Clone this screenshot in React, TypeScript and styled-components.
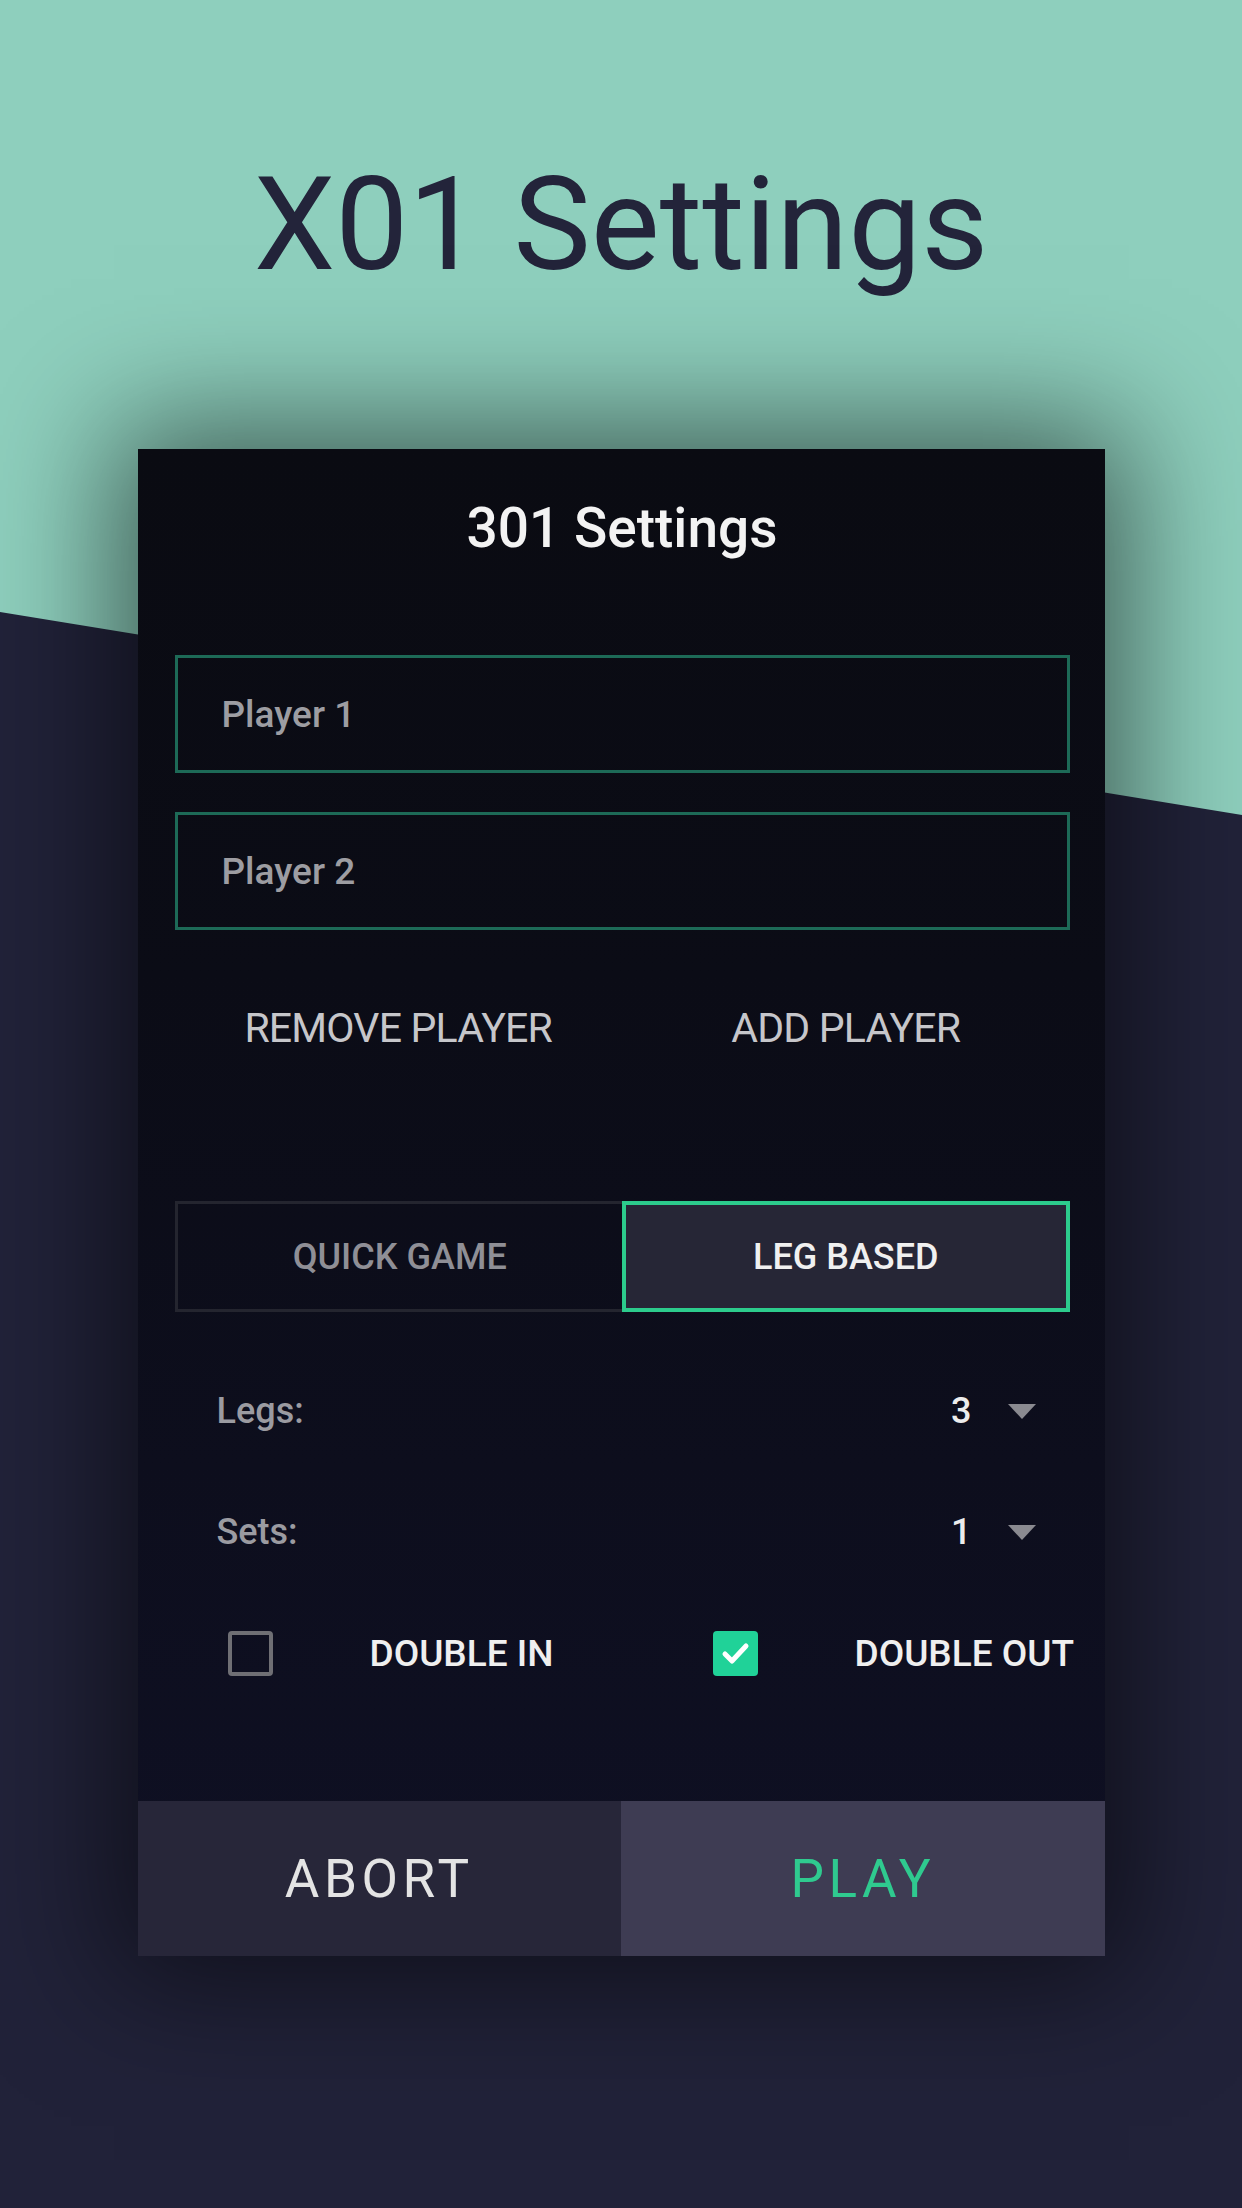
import React from "react";
import styled, { createGlobalStyle } from "styled-components";

const GlobalStyle = createGlobalStyle`
  html, body {
    margin: 0;
    padding: 0;
  }
  body {
    background: #21223a;
    font-family: Roboto, "Noto Sans", sans-serif;
  }
  *, *::before, *::after {
    box-sizing: border-box;
  }
`;

const Page = styled.div`
  position: relative;
  width: 1242px;
  min-height: 2208px;
  padding-top: 149px;
  background: #212239;
  overflow: hidden;

  &::before {
    content: "";
    position: absolute;
    inset: 0;
    background: #8ecfbd;
    clip-path: polygon(0 0, 100% 0, 100% 815px, 0 612px);
  }
`;

const Title = styled.h1`
  position: relative;
  margin: 0;
  font-family: Roboto, sans-serif;
  font-weight: 400;
  font-size: 130px;
  line-height: 152px;
  color: #23243a;
  text-align: center;
`;

const Card = styled.section`
  position: relative;
  width: 967px;
  margin: 148px auto 0;
  background: linear-gradient(180deg, #0a0b12 0%, #0b0c16 35%, #0f1024 100%);
  box-shadow: 0 0 120px 24px rgba(0, 0, 0, 0.55);
`;

const CardBody = styled.div`
  display: flex;
  flex-direction: column;
  padding: 47px 35px 108px 37px;
`;

const CardTitle = styled.h2`
  margin: 0;
  font-family: Roboto, sans-serif;
  font-weight: 500;
  font-size: 55px;
  line-height: 64px;
  color: #f3f3f3;
  text-align: center;
`;

const PlayerList = styled.div`
  display: flex;
  flex-direction: column;
  gap: 39px;
  margin-top: 95px;
`;

const PlayerInput = styled.input`
  display: block;
  width: 100%;
  height: 118px;
  padding: 0 0 0 44px;
  border: 3px solid #1d6a57;
  background: transparent;
  outline: none;
  font-family: Roboto, sans-serif;
  font-weight: 500;
  font-size: 37px;
  color: #9d9da2;

  &::placeholder {
    color: #9d9da2;
    opacity: 1;
  }
`;

const ActionRow = styled.div`
  display: grid;
  grid-template-columns: 1fr 1fr;
  height: 116px;
  margin-top: 40px;
`;

const TextButton = styled.button`
  display: flex;
  align-items: center;
  justify-content: center;
  padding: 0;
  border: none;
  background: none;
  font-family: Roboto, sans-serif;
  font-weight: 400;
  font-size: 41px;
  letter-spacing: -0.8px;
  color: #c6c6ca;
  cursor: pointer;
`;

const ModeToggle = styled.div`
  display: grid;
  grid-template-columns: 1fr 1fr;
  height: 111px;
  margin-top: 115px;
`;

const ModeButton = styled.button<{ $active?: boolean }>`
  display: flex;
  align-items: center;
  justify-content: center;
  padding: 0;
  border: ${(p) => (p.$active ? "4px solid #2ccb8c" : "3px solid #24252f")};
  border-right-width: ${(p) => (p.$active ? "4px" : "0")};
  background: ${(p) => (p.$active ? "#262636" : "transparent")};
  font-family: Roboto, sans-serif;
  font-weight: 500;
  font-size: 36px;
  color: ${(p) => (p.$active ? "#f0f0f0" : "#8f8f96")};
  cursor: pointer;
`;

const SettingsList = styled.div`
  display: flex;
  flex-direction: column;
  gap: 41px;
  margin-top: 59px;
`;

const SettingRow = styled.div`
  display: flex;
  align-items: center;
  justify-content: space-between;
  height: 80px;
  padding: 0 34px 0 42px;
`;

const SettingLabel = styled.span`
  font-family: Roboto, sans-serif;
  font-weight: 500;
  font-size: 36px;
  color: #9b9ba1;
`;

const SelectValue = styled.div`
  display: flex;
  align-items: center;
  gap: 36px;
  font-family: Roboto, sans-serif;
  font-weight: 500;
  font-size: 36px;
  color: #ececec;
`;

const Caret = styled.span`
  width: 0;
  height: 0;
  border-left: 14px solid transparent;
  border-right: 14px solid transparent;
  border-top: 15px solid #8a8a90;
`;

const CheckRow = styled.div`
  display: flex;
  align-items: center;
  height: 80px;
  margin-top: 41px;
  padding-left: 53px;
`;

const CheckItem = styled.label`
  display: flex;
  align-items: center;
  gap: 97px;
  width: 485px;
  flex: none;
`;

const CheckBox = styled.span<{ $checked?: boolean }>`
  display: flex;
  align-items: center;
  justify-content: center;
  width: 45px;
  height: 45px;
  flex: none;
  border-radius: 4px;
  border: ${(p) => (p.$checked ? "none" : "4px solid #6f6f74")};
  background: ${(p) => (p.$checked ? "#20d298" : "transparent")};
`;

const CheckLabel = styled.span`
  white-space: nowrap;
  font-family: Roboto, sans-serif;
  font-weight: 500;
  font-size: 37px;
  color: #efefef;
`;

const Footer = styled.div`
  display: grid;
  grid-template-columns: 1fr 1fr;
  height: 155px;
`;

const FooterButton = styled.button<{ $primary?: boolean }>`
  display: flex;
  align-items: center;
  justify-content: center;
  padding: 0;
  border: none;
  background: ${(p) => (p.$primary ? "#3e3c53" : "#272639")};
  font-family: Roboto, sans-serif;
  font-weight: 400;
  font-size: 53px;
  letter-spacing: 4.5px;
  color: ${(p) => (p.$primary ? "#2fca8f" : "#e4e4e4")};
  cursor: pointer;
`;

const CheckMark = () => (
  <svg width="45" height="45" viewBox="0 0 45 45" fill="none">
    <polyline
      points="12,23 19,30 33,15"
      stroke="#ffffff"
      strokeWidth="5"
      strokeLinecap="round"
      strokeLinejoin="round"
    />
  </svg>
);

const settings = [
  { label: "Legs:", value: "3" },
  { label: "Sets:", value: "1" },
];

const checks = [
  { label: "DOUBLE IN", checked: false },
  { label: "DOUBLE OUT", checked: true },
];

export default function App() {
  return (
    <>
      <GlobalStyle />
      <Page>
        <Title>X01 Settings</Title>
        <Card>
          <CardBody>
            <CardTitle>301 Settings</CardTitle>
            <PlayerList>
              <PlayerInput placeholder="Player 1" />
              <PlayerInput placeholder="Player 2" />
            </PlayerList>
            <ActionRow>
              <TextButton>REMOVE PLAYER</TextButton>
              <TextButton>ADD PLAYER</TextButton>
            </ActionRow>
            <ModeToggle>
              <ModeButton>QUICK GAME</ModeButton>
              <ModeButton $active>LEG BASED</ModeButton>
            </ModeToggle>
            <SettingsList>
              {settings.map((s) => (
                <SettingRow key={s.label}>
                  <SettingLabel>{s.label}</SettingLabel>
                  <SelectValue>
                    {s.value}
                    <Caret />
                  </SelectValue>
                </SettingRow>
              ))}
            </SettingsList>
            <CheckRow>
              {checks.map((c) => (
                <CheckItem key={c.label}>
                  <CheckBox $checked={c.checked}>{c.checked && <CheckMark />}</CheckBox>
                  <CheckLabel>{c.label}</CheckLabel>
                </CheckItem>
              ))}
            </CheckRow>
          </CardBody>
          <Footer>
            <FooterButton>ABORT</FooterButton>
            <FooterButton $primary>PLAY</FooterButton>
          </Footer>
        </Card>
      </Page>
    </>
  );
}
